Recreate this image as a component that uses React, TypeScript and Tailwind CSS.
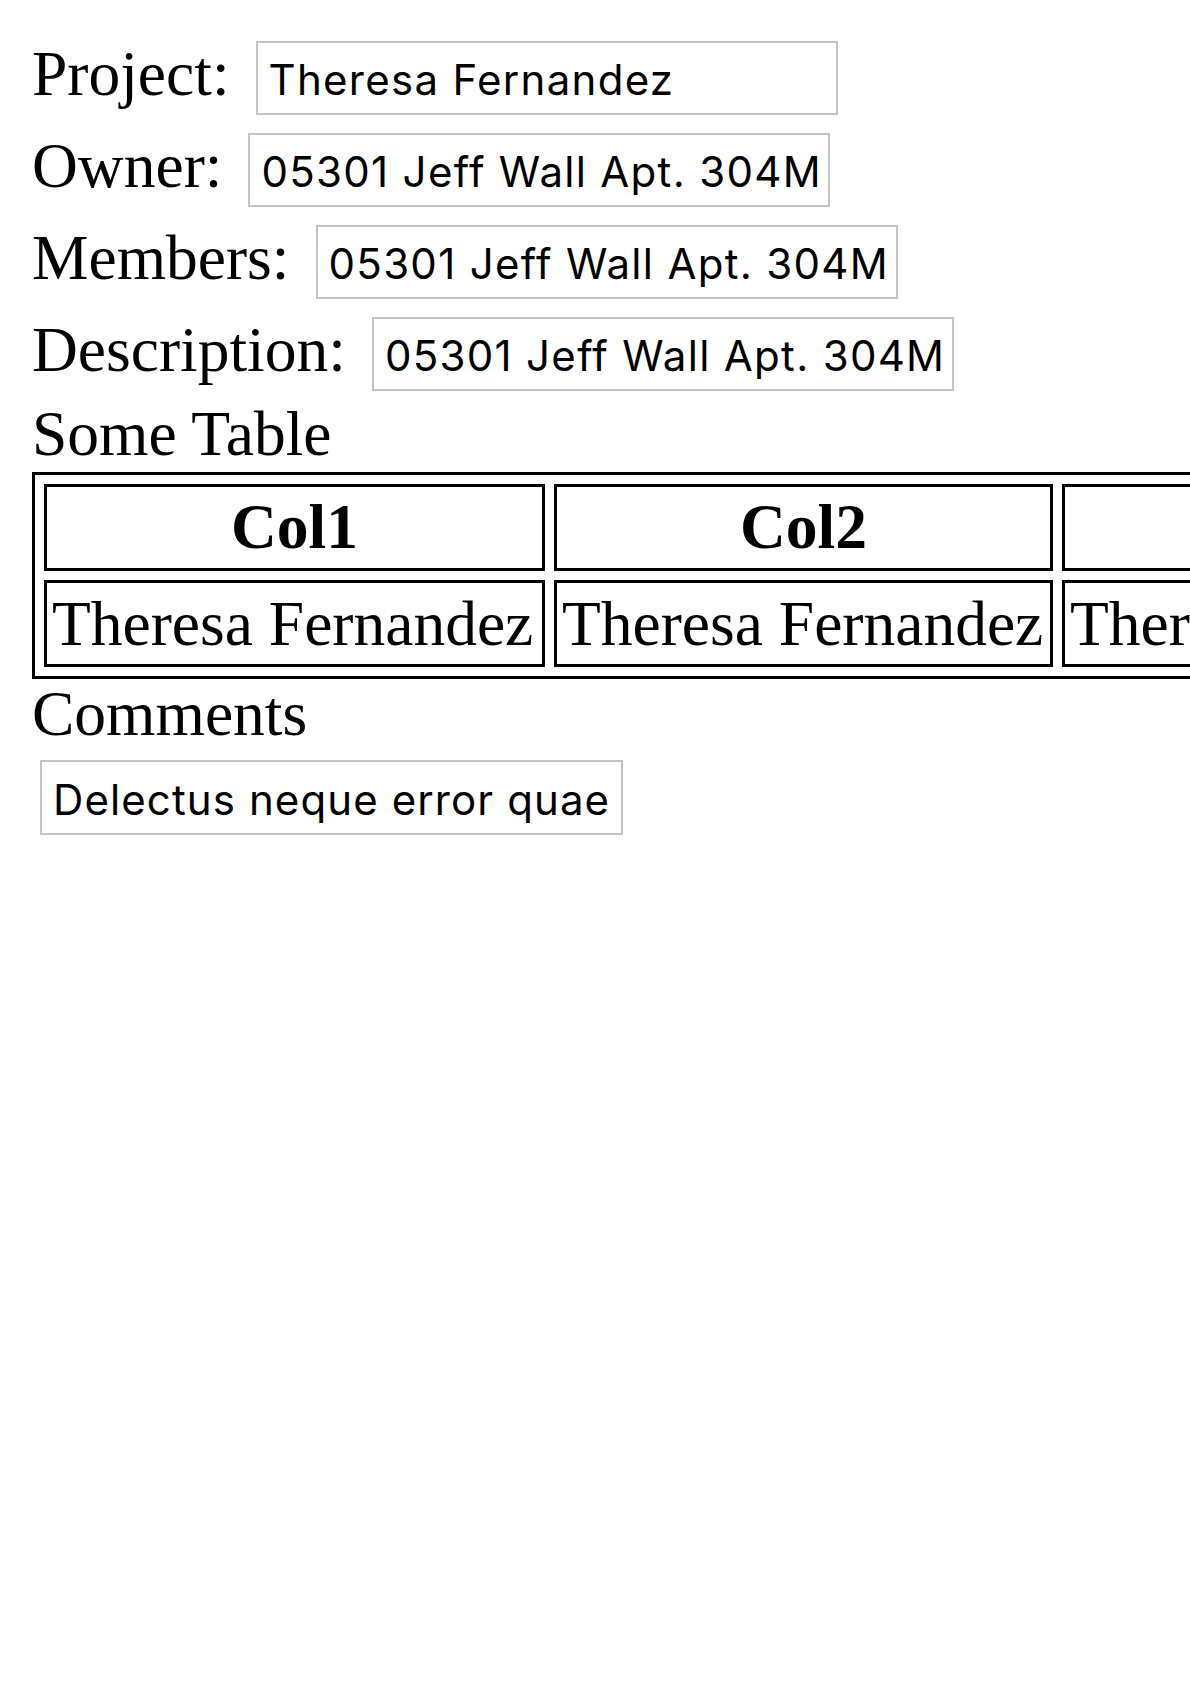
import React from "react";

const fields = [
  { label: "Project", value: "Theresa Fernandez" },
  { label: "Owner", value: "05301 Jeff Wall Apt. 304M" },
  { label: "Members", value: "05301 Jeff Wall Apt. 304M" },
  { label: "Description", value: "05301 Jeff Wall Apt. 304M" },
];

const columns = ["Col1", "Col2", "Col3"];
const widths = ["w-[501px]", "w-[499px]", "w-[501px]"];

export default function App() {
  return (
    <div className="w-[1190px] min-h-[1684px] overflow-hidden bg-white text-black pl-[32px] pt-[41px] font-['Liberation_Serif','Times_New_Roman',serif]">
      <form className="flex flex-col gap-[18px]">
        {fields.map((f) => (
          <div key={f.label} className="flex items-baseline">
            <label className="text-[63.5px] leading-[64px] whitespace-nowrap">{f.label}:</label>
            <div className="ml-[26px] w-[582px] h-[74px] shrink-0 border-2 border-[#c4c4c4] pl-[11px] pt-[5px] font-['Inter',sans-serif] text-[42px] tracking-[1.3px] leading-[64px] whitespace-nowrap overflow-hidden">
              {f.value}
            </div>
          </div>
        ))}
      </form>

      <h2 className="mt-[11px] text-[63.5px] leading-[64px] font-normal">Some Table</h2>

      <table className="w-max mt-[6px] border-separate border-spacing-[9px] border-[3px] border-black">
        <thead>
          <tr>
            {columns.map((c, i) => (
              <th
                key={c}
                className={`${widths[i]} h-[87px] border-[3px] border-black p-0 pt-[8px] align-top text-center font-bold text-[63.5px] leading-[64px] whitespace-nowrap`}
              >
                {c}
              </th>
            ))}
          </tr>
        </thead>
        <tbody>
          <tr>
            {columns.map((c, i) => (
              <td
                key={c}
                className={`${widths[i]} h-[87px] border-[3px] border-black p-0 pl-[5px] pt-[9px] align-top text-left text-[63.5px] leading-[64px] whitespace-nowrap`}
              >
                Theresa Fernandez
              </td>
            ))}
          </tr>
        </tbody>
      </table>

      <h2 className="mt-[3px] text-[63.5px] leading-[64px] font-normal">Comments</h2>
      <div className="ml-[8px] mt-[14px] w-[583px] h-[75px] border-2 border-[#c4c4c4] pl-[11px] pt-[6px] font-['Inter',sans-serif] text-[42px] tracking-[1.1px] leading-[64px] whitespace-nowrap">
        Delectus neque error quae
      </div>
    </div>
  );
}
